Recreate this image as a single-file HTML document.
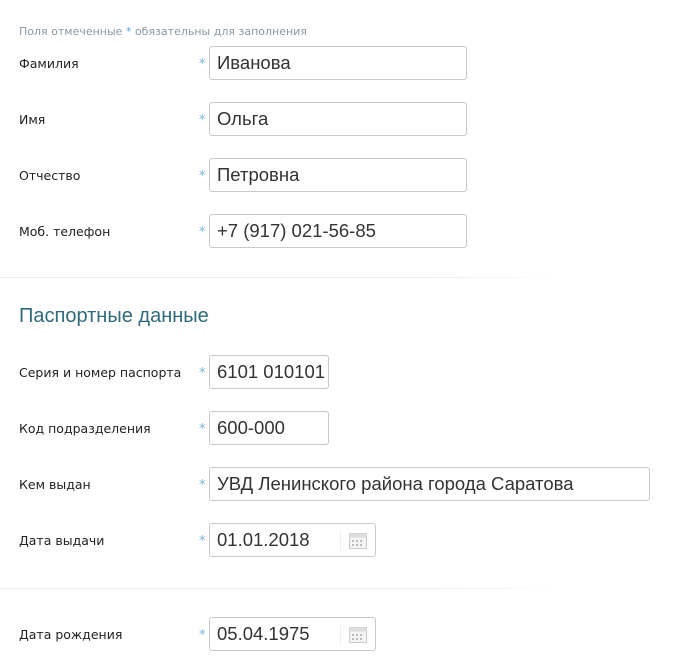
<!DOCTYPE html>
<html><head><meta charset="utf-8"><style>
body{margin:0;width:700px;height:664px;background:#fff;font-family:"DejaVu Sans","Liberation Sans",sans-serif;position:relative;overflow:hidden}
.a{position:absolute}
.note{left:19px;top:25px;font-size:11px;color:#8a9aa3}
.note b{color:#5aa6d0;font-weight:normal}
.lbl{left:19px;font-size:12.5px;color:#222}
.st{left:199px;font-size:13px;color:#7ab7d8;margin-top:2px}
.in{left:209px;border:1px solid #c9c9c9;border-radius:3px;background:#fff;box-sizing:border-box;height:34px;font-family:"Liberation Sans",sans-serif;font-size:18.5px;color:#333;line-height:32px;padding-left:7px;white-space:nowrap;overflow:hidden}
.sep{left:0;width:560px;height:1px;background:linear-gradient(to right,#ececec,#ececec 75%,#fff)}
h2{position:absolute;left:19px;top:305px;margin:0;font-family:"Liberation Sans",sans-serif;font-weight:normal;font-size:20px;color:#2f6b7a}
.cal{position:absolute;right:8px;top:9px}
.div{position:absolute;right:34px;top:7px;width:1px;height:20px;background:#eee}
</style></head><body>
<div class="a note">Поля отмеченные <b>*</b> обязательны для заполнения</div>

<div class="a lbl" style="top:56px">Фамилия</div><div class="a st" style="top:55px">*</div>
<div class="a in" style="top:46px;width:258px">Иванова</div>
<div class="a lbl" style="top:112px">Имя</div><div class="a st" style="top:111px">*</div>
<div class="a in" style="top:102px;width:258px">Ольга</div>
<div class="a lbl" style="top:168px">Отчество</div><div class="a st" style="top:167px">*</div>
<div class="a in" style="top:158px;width:258px">Петровна</div>
<div class="a lbl" style="top:224px">Моб. телефон</div><div class="a st" style="top:223px">*</div>
<div class="a in" style="top:214px;width:258px">+7 (917) 021-56-85</div>

<div class="a sep" style="top:277px"></div>
<h2>Паспортные данные</h2>

<div class="a lbl" style="top:365px">Серия и номер паспорта</div><div class="a st" style="top:364px">*</div>
<div class="a in" style="top:355px;width:120px">6101 010101</div>
<div class="a lbl" style="top:421px">Код подразделения</div><div class="a st" style="top:420px">*</div>
<div class="a in" style="top:411px;width:120px">600-000</div>
<div class="a lbl" style="top:477px">Кем выдан</div><div class="a st" style="top:476px">*</div>
<div class="a in" style="top:467px;width:441px">УВД Ленинского района города Саратова</div>
<div class="a lbl" style="top:533px">Дата выдачи</div><div class="a st" style="top:532px">*</div>
<div class="a in" style="top:523px;width:167px">01.01.2018<div class="div"></div><svg class="cal" width="18" height="16" viewBox="0 0 18 16"><rect x="0.5" y="0.5" width="17" height="15" fill="#f4f4f4" stroke="#ccc"/><rect x="0.5" y="0.5" width="17" height="4" fill="#ddd"/><g fill="#bbb"><rect x="3" y="7" width="2" height="2"/><rect x="7" y="7" width="2" height="2"/><rect x="11" y="7" width="2" height="2"/><rect x="3" y="11" width="2" height="2"/><rect x="7" y="11" width="2" height="2"/><rect x="11" y="11" width="2" height="2"/></g></svg></div>

<div class="a sep" style="top:588px"></div>

<div class="a lbl" style="top:627px">Дата рождения</div><div class="a st" style="top:626px">*</div>
<div class="a in" style="top:617px;width:167px">05.04.1975<div class="div"></div><svg class="cal" width="18" height="16" viewBox="0 0 18 16"><rect x="0.5" y="0.5" width="17" height="15" fill="#f4f4f4" stroke="#ccc"/><rect x="0.5" y="0.5" width="17" height="4" fill="#ddd"/><g fill="#bbb"><rect x="3" y="7" width="2" height="2"/><rect x="7" y="7" width="2" height="2"/><rect x="11" y="7" width="2" height="2"/><rect x="3" y="11" width="2" height="2"/><rect x="7" y="11" width="2" height="2"/><rect x="11" y="11" width="2" height="2"/></g></svg></div>
</body></html>
